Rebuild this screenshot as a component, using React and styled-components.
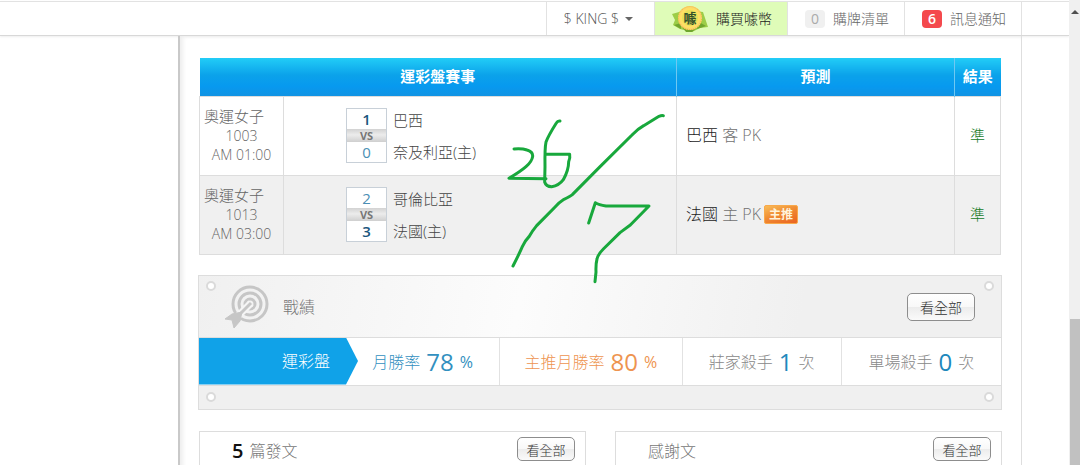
import styled, { createGlobalStyle } from "styled-components";

const GlobalStyle = createGlobalStyle`
  * {
    box-sizing: border-box;
  }
  body {
    margin: 0;
    background: #ffffff;
    color: #888888;
    font-family: "Open Sans", "Noto Sans CJK TC", sans-serif;
    font-size: 14px;
    font-weight: 300;
    line-height: 20px;
  }
  a {
    color: inherit;
    text-decoration: none;
  }
  button {
    font-family: inherit;
    font-weight: inherit;
    cursor: pointer;
  }
`;

const Page = styled.div`
  display: flex;
  height: 100vh;
  overflow: hidden;
`;

const Content = styled.div`
  flex: 1;
  min-width: 0;
  display: flex;
  flex-direction: column;
`;

const ScrollTrack = styled.div`
  width: 11px;
  background: #f0f0f0;
  display: flex;
  flex-direction: column;
  justify-content: space-between;
  align-items: center;
  padding-top: 10px;
`;

const ScrollArrow = styled.div`
  border: 4px solid transparent;
  border-top: 0;
  border-bottom: 4px solid #505050;
`;

const ScrollThumb = styled.div`
  width: 10px;
  height: calc(100vh - 319px);
  background: #c1c1c1;
`;

const TopBar = styled.nav`
  display: flex;
  justify-content: flex-end;
  height: 35px;
  flex-shrink: 0;
  margin-top: 1px;
  padding-right: 47px;
  border-top: 1px solid #e2e2e2;
  border-bottom: 1px solid #d8d8d8;
  box-shadow: 0 1px 2px #eeeeee;
`;

const NavItem = styled.a`
  display: flex;
  align-items: center;
  gap: 8px;
  padding: 0 15px 0 17px;
  border-left: 1px solid #e2e2e2;
  color: ${({ $green }) => ($green ? "#222222" : "#666666")};
  background: ${({ $green }) => ($green ? "#dffcb8" : "transparent")};
  white-space: nowrap;
  &:last-child {
    border-right: 1px solid #e2e2e2;
  }
`;

const UserMenu = styled.button`
  display: flex;
  align-items: center;
  gap: 6px;
  padding: 0 21px 0 17px;
  border: 0;
  border-left: 1px solid #e2e2e2;
  background: none;
  color: #555555;
  font-size: 14px;
`;

const Caret = styled.span`
  border: 4px solid transparent;
  border-top-color: #666666;
  border-bottom: 0;
`;

const Count = styled.span`
  min-width: 20px;
  height: 18px;
  border-radius: 4px;
  background: ${({ $alert }) => ($alert ? "#f4494d" : "#f0f0f0")};
  color: ${({ $alert }) => ($alert ? "#ffffff" : "#aaaaaa")};
  font-weight: ${({ $alert }) => ($alert ? 600 : 400)};
  line-height: 18px;
  text-align: center;
`;

const Main = styled.main`
  flex: 1;
  margin: 0 47px 0 178px;
  padding: 22px 20px 0 19px;
  border-left: 2px solid #c9c9c9;
  border-right: 1px solid #dedede;
  box-shadow: inset 3px 0 4px #eeeeee;
`;

const MatchSection = styled.section`
  position: relative;
  margin-bottom: 20px;
`;

const MatchTable = styled.table`
  width: 100%;
  table-layout: fixed;
  border-collapse: collapse;
`;

const LeagueCol = styled.col`
  width: 84px;
`;

const PickCol = styled.col`
  width: 278px;
`;

const ResultCol = styled.col`
  width: 46px;
`;

const HeadCell = styled.th`
  height: 38px;
  padding: 0 0 2px;
  background: linear-gradient(#22cdf7, #0ba2ea 45%, #0799ef 75%, #1193e3);
  border-left: 1px solid #6fc8f2;
  color: #ffffff;
  font-size: 15px;
  font-weight: 700;
  &:first-child {
    border-left: 0;
  }
`;

const Row = styled.tr`
  height: 79px;
  background: ${({ $shaded }) => ($shaded ? "#f0f0f0" : "#ffffff")};
`;

const Cell = styled.td`
  padding: 0;
  border: 1px solid #dddddd;
`;

const InfoCell = styled(Cell)`
  color: #666666;
  line-height: 19px;
  text-align: center;
`;

const League = styled.div`
  padding-left: 4px;
  font-size: 15px;
  text-align: left;
`;

const Match = styled.div`
  display: flex;
  align-items: center;
  gap: 6px;
  padding-left: 62px;
`;

const ScoreBox = styled.div`
  width: 41px;
  border: 1px solid #c8d0d8;
  background: #ffffff;
  text-align: center;
`;

const Score = styled.div`
  color: ${({ $win }) => ($win ? "#1b567e" : "#4b8fb5")};
  font-weight: ${({ $win }) => ($win ? 600 : 400)};
  font-size: 15px;
  line-height: 20px;
`;

const Versus = styled.div`
  background: linear-gradient(#d2d2d2, #ececec 45%, #cfcfcf);
  color: #777777;
  font-size: 11px;
  font-weight: 700;
  line-height: 13px;
`;

const Teams = styled.div`
  display: flex;
  flex-direction: column;
  gap: 12px;
  color: #444444;
  font-size: 15px;
`;

const PickCell = styled(Cell)`
  padding: 0 0 2px 9px;
  color: #707070;
  font-size: 16px;
`;

const PickTeam = styled.span`
  color: #222222;
`;

const MainPick = styled.span`
  display: inline-block;
  margin-left: 3px;
  padding: 0 4px;
  border: 1px solid #f9a94a;
  border-radius: 2px;
  background: linear-gradient(160deg, #f8bc58, #f08c34 45%, #ea6220);
  color: #fff3dc;
  font-size: 12px;
  font-weight: 700;
  line-height: 17px;
  vertical-align: 1px;
`;

const ResultCell = styled(Cell)`
  padding-bottom: 2px;
  color: #157a1e;
  font-size: 15px;
  text-align: center;
`;

const Ink = styled.svg`
  position: absolute;
  left: 306px;
  top: 54px;
  pointer-events: none;
`;

const Record = styled.section`
  margin: 0 -1px 21px;
  border: 1px solid #dddddd;
  background: #f0f0f0;
`;

const RecordHead = styled.header`
  display: flex;
  height: 61px;
  padding: 5px 7px 0;
  background: linear-gradient(100deg, #f0f0f0, #fcfcfc 40%, #f0f0f0 75%);
`;

const RecordFoot = styled.footer`
  display: flex;
  justify-content: space-between;
  padding: 6px 7px 7px;
`;

const Rivet = styled.span`
  width: 10px;
  height: 10px;
  border: 2px solid #dadada;
  border-radius: 50%;
  background: #ffffff;
`;

const RecordTitle = styled.h2`
  display: flex;
  flex: 1;
  align-items: center;
  gap: 14px;
  margin: 0 0 4px 9px;
  color: #777777;
  font-size: 16px;
  font-weight: 300;
`;

const ViewAll = styled.button`
  width: ${({ $small }) => ($small ? "58px" : "68px")};
  height: ${({ $small }) => ($small ? "24px" : "28px")};
  padding: 0;
  border: 1px solid #8d8d8d;
  border-radius: 5px;
  background: linear-gradient(#ffffff, #f8f8f8 50%, #ececec 51%, #fafafa);
  color: #333333;
  font-size: ${({ $small }) => ($small ? "13px" : "14px")};
`;

const RecordAction = styled.div`
  padding: 12px 9px 0 0;
`;

const Stats = styled.div`
  display: grid;
  grid-template-columns: 147px 154fr 182fr 159fr 159fr;
  height: 49px;
  border-top: 1px solid #dddddd;
  border-bottom: 1px solid #dddddd;
  background: #ffffff;
`;

const StatsLabel = styled.div`
  display: flex;
  align-items: center;
  justify-content: flex-end;
  margin-right: -12px;
  padding-right: 28px;
  background: #10a2e8;
  clip-path: polygon(0 0, 147px 0, 100% 50%, 147px 100%, 0 100%);
  color: #ffffff;
  font-size: 16px;
`;

const Stat = styled.div`
  display: flex;
  align-items: center;
  justify-content: center;
  gap: 6px;
  padding-top: 2px;
  border-right: 1px solid #e2e2e2;
  color: ${({ $color }) => $color || "#888888"};
  font-size: 16px;
  white-space: nowrap;
  &:last-child {
    border-right: 0;
  }
`;

const StatValue = styled.strong`
  color: ${({ $color }) => $color || "#2088bc"};
  font-size: 24px;
  font-weight: 400;
`;

const StatUnit = styled.span`
  font-weight: ${({ $strong }) => ($strong ? 400 : 300)};
`;

const Cards = styled.div`
  display: grid;
  grid-template-columns: 1fr 1fr;
  gap: 29px;
  margin-right: -1px;
`;

const Card = styled.section`
  display: flex;
  align-items: center;
  justify-content: space-between;
  height: 90px;
  padding: 5px 10px 58px 32px;
  border: 1px solid #dddddd;
`;

const CardTitle = styled.h3`
  display: flex;
  align-items: center;
  gap: 6px;
  margin: 4px 0 0;
  color: #777777;
  font-size: 16px;
  font-weight: 300;
`;

const PostCount = styled.strong`
  color: #111111;
  font-size: 20px;
  font-weight: 600;
`;

const matches = [
  {
    id: 1003,
    league: "奧運女子",
    time: "AM 01:00",
    away: { name: "巴西", score: 1 },
    home: { name: "奈及利亞(主)", score: 0 },
    pick: "巴西",
    side: "客 PK",
    isMain: false,
    result: "準",
  },
  {
    id: 1013,
    league: "奧運女子",
    time: "AM 03:00",
    away: { name: "哥倫比亞", score: 2 },
    home: { name: "法國(主)", score: 3 },
    pick: "法國",
    side: "主 PK",
    isMain: true,
    result: "準",
  },
];

const stats = [
  { label: "月勝率", value: 78, unit: "%", color: "#3290c0" },
  { label: "主推月勝率", value: 80, unit: "%", color: "#ee9450" },
  { label: "莊家殺手", value: 1, unit: "次" },
  { label: "單場殺手", value: 0, unit: "次" },
];

function CoinIcon() {
  return (
    <svg width="36" height="28" viewBox="0 0 36 28" aria-hidden="true">
      <path d="M0 9 L14 5 L31 7 L33 13 L36 22 L28 23 L20 27 L8 24 L1 20 L3 15 Z" fill="#9ccd48" />
      <path d="M2 20 L9 18 L9 24 Z M27 17 L34 21 L25 24 Z M10 22 L26 22 L20 27 L14 27 Z" fill="#6fa52e" />
      <circle cx="18" cy="13" r="12" fill="#f5c23c" />
      <circle cx="18" cy="13" r="11" fill="#ffdf62" stroke="#f7cf78" strokeWidth="2" strokeDasharray="1 1" />
      <circle cx="18" cy="13" r="8" fill="#e6e05a" />
      <text x="18" y="18" textAnchor="middle" fontSize="13" fontWeight="700" fill="#34502a">
        噱
      </text>
    </svg>
  );
}

function TargetIcon() {
  return (
    <svg width="44" height="44" viewBox="0 0 44 44" fill="none" stroke="#c6c6c6" aria-hidden="true">
      <circle cx="25" cy="19" r="17" strokeWidth="3" />
      <circle cx="25" cy="19" r="11" strokeWidth="3" />
      <circle cx="25" cy="19" r="5" strokeWidth="3" />
      <path d="M26 18 L10 34" stroke="#f5f5f5" strokeWidth="7" />
      <path d="M26 18 L10 34" strokeWidth="3" />
      <path d="M0 34 L7 29 L17 27 L15 36 L9 43 L7 35 Z" fill="#c6c6c6" />
    </svg>
  );
}

function DateInk() {
  return (
    <Ink
      width="163"
      height="173"
      viewBox="45 36 489 519"
      fill="none"
      stroke="#18a83c"
      strokeWidth="9"
      strokeLinecap="round"
      strokeLinejoin="round"
      role="img"
      aria-label="26/7"
    >
      <path d="M72 147 Q96 145 111 150 Q129 155 128 169 Q126 184 108 200 Q92 214 57 235 L168 236" />
      <path d="M210 63 Q203 62 199 69 Q175 107 168 126 Q164 145 165 200 L164 246 Q168 260 185 260 Q207 257 220 239 Q236 210 236 185 Q241 172 239 163 L165 163" />
      <path d="M520 47 Q514 46 507 49 L461 77 Q443 87 426 105 L328 202 L247 284 Q240 290 222 298 Q209 306 193 323 L140 377 Q126 394 117 410 Q106 421 97 440 Q86 465 69 498" />
      <path d="M296 369 L316 308 Q326 314 348 318 L477 318 L421 375 L390 398 L340 447 Q324 463 321 477 Q317 492 318 516 L315 545" />
    </Ink>
  );
}

function MatchRow({ match, shaded }) {
  const { home, away } = match;
  return (
    <Row $shaded={shaded}>
      <InfoCell>
        <League>{match.league}</League>
        <div>{match.id}</div>
        <div>{match.time}</div>
      </InfoCell>
      <Cell>
        <Match>
          <ScoreBox>
            <Score $win={away.score > home.score}>{away.score}</Score>
            <Versus>VS</Versus>
            <Score $win={home.score > away.score}>{home.score}</Score>
          </ScoreBox>
          <Teams>
            <span>{away.name}</span>
            <span>{home.name}</span>
          </Teams>
        </Match>
      </Cell>
      <PickCell>
        <PickTeam>{match.pick}</PickTeam> {match.side}
        {match.isMain && <MainPick>主推</MainPick>}
      </PickCell>
      <ResultCell>{match.result}</ResultCell>
    </Row>
  );
}

export default function App() {
  return (
    <>
      <GlobalStyle />
      <Page>
        <Content>
          <TopBar>
            <UserMenu type="button">
              $ KING $ <Caret />
            </UserMenu>
            <NavItem href="#coins" $green>
              <CoinIcon />
              購買噱幣
            </NavItem>
            <NavItem href="#cart">
              <Count>0</Count>
              購牌清單
            </NavItem>
            <NavItem href="#notices">
              <Count $alert>6</Count>
              訊息通知
            </NavItem>
          </TopBar>
          <Main>
            <MatchSection>
              <MatchTable>
                <colgroup>
                  <LeagueCol />
                  <col />
                  <PickCol />
                  <ResultCol />
                </colgroup>
                <thead>
                  <tr>
                    <HeadCell colSpan={2}>運彩盤賽事</HeadCell>
                    <HeadCell>預測</HeadCell>
                    <HeadCell>結果</HeadCell>
                  </tr>
                </thead>
                <tbody>
                  {matches.map((match, index) => (
                    <MatchRow key={match.id} match={match} shaded={index % 2 === 1} />
                  ))}
                </tbody>
              </MatchTable>
              <DateInk />
            </MatchSection>
            <Record>
              <RecordHead>
                <Rivet />
                <RecordTitle>
                  <TargetIcon />
                  戰績
                </RecordTitle>
                <RecordAction>
                  <ViewAll type="button">看全部</ViewAll>
                </RecordAction>
                <Rivet />
              </RecordHead>
              <Stats>
                <StatsLabel>運彩盤</StatsLabel>
                {stats.map(({ label, value, unit, color }) => (
                  <Stat key={label} $color={color}>
                    {label}
                    <StatValue $color={color}>{value}</StatValue>
                    <StatUnit $strong={unit === "%"}>{unit}</StatUnit>
                  </Stat>
                ))}
              </Stats>
              <RecordFoot>
                <Rivet />
                <Rivet />
              </RecordFoot>
            </Record>
            <Cards>
              <Card>
                <CardTitle>
                  <PostCount>5</PostCount>
                  篇發文
                </CardTitle>
                <ViewAll type="button" $small>
                  看全部
                </ViewAll>
              </Card>
              <Card>
                <CardTitle>感謝文</CardTitle>
                <ViewAll type="button" $small>
                  看全部
                </ViewAll>
              </Card>
            </Cards>
          </Main>
        </Content>
        <ScrollTrack>
          <ScrollArrow />
          <ScrollThumb />
        </ScrollTrack>
      </Page>
    </>
  );
}
